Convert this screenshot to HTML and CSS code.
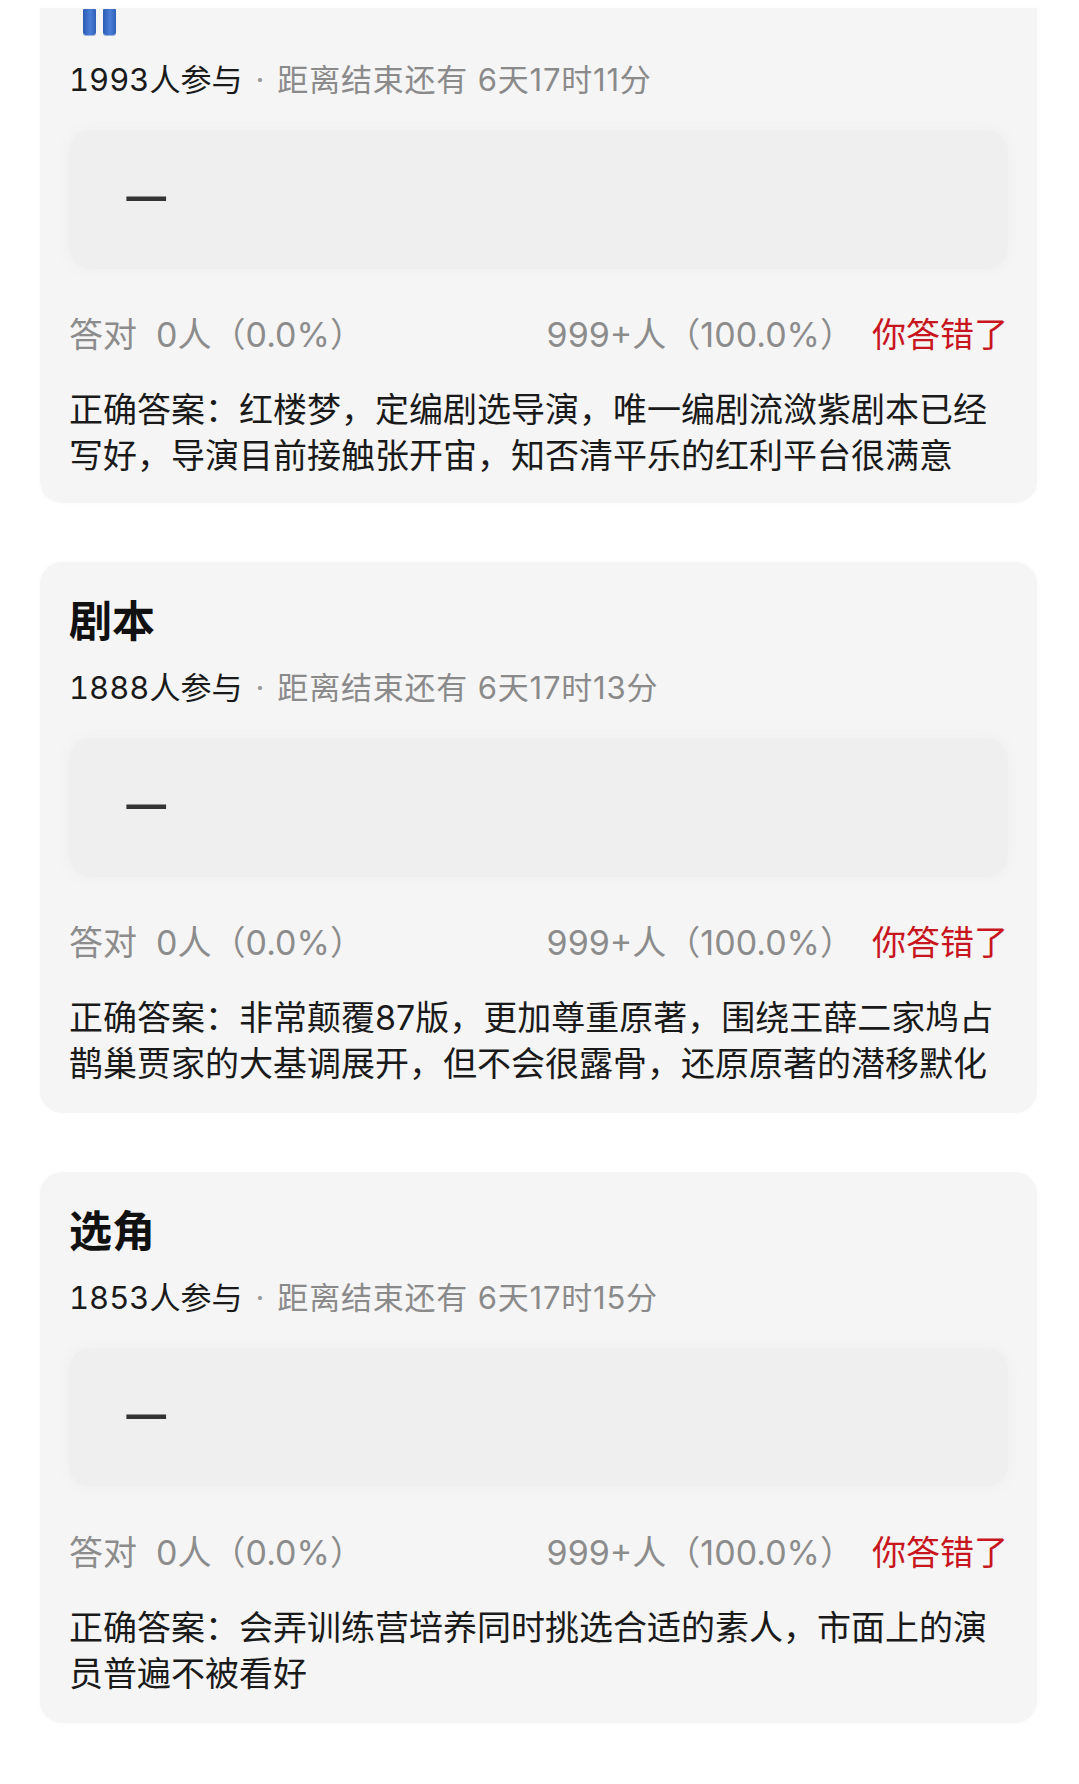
FILE: index.html
```html
<!DOCTYPE html>
<html lang="zh-CN">
<head>
<meta charset="utf-8">
<title>答题结果</title>
<link rel="stylesheet" href="styles.css">
</head>
<body>
<div class="feed">
  <section class="card card-cut">
    <div class="bars"><span class="bar"></span><span class="bar"></span></div>
    <div class="meta"><span class="count">1993人参与</span><span class="dot">·</span><span class="remain">距离结束还有 6天17时11分</span></div>
    <div class="choice"><span class="dash">—</span></div>
    <div class="result">
      <span class="right-count">答对&nbsp;&nbsp;0人（0.0%）</span>
      <span class="wrong-count">999+人（100.0%）</span>
      <span class="verdict">你答错了</span>
    </div>
    <p class="answer">正确答案：红楼梦，定编剧选导演，唯一编剧流潋紫剧本已经写好，导演目前接触张开宙，知否清平乐的红利平台很满意</p>
  </section>

  <section class="card">
    <h2 class="title">剧本</h2>
    <div class="meta"><span class="count">1888人参与</span><span class="dot">·</span><span class="remain">距离结束还有 6天17时13分</span></div>
    <div class="choice"><span class="dash">—</span></div>
    <div class="result">
      <span class="right-count">答对&nbsp;&nbsp;0人（0.0%）</span>
      <span class="wrong-count">999+人（100.0%）</span>
      <span class="verdict">你答错了</span>
    </div>
    <p class="answer">正确答案：非常颠覆87版，更加尊重原著，围绕王薛二家鸠占鹊巢贾家的大基调展开，但不会很露骨，还原原著的潜移默化</p>
  </section>

  <section class="card">
    <h2 class="title">选角</h2>
    <div class="meta"><span class="count">1853人参与</span><span class="dot">·</span><span class="remain">距离结束还有 6天17时15分</span></div>
    <div class="choice"><span class="dash">—</span></div>
    <div class="result">
      <span class="right-count">答对&nbsp;&nbsp;0人（0.0%）</span>
      <span class="wrong-count">999+人（100.0%）</span>
      <span class="verdict">你答错了</span>
    </div>
    <p class="answer">正确答案：会弄训练营培养同时挑选合适的素人，市面上的演员普遍不被看好</p>
  </section>
</div>
</body>
</html>
```

FILE: styles.css
```css
html, body {
  margin: 0;
  padding: 0;
  background: #ffffff;
}

body {
  font-family: "Inter", "Noto Sans CJK SC", "Noto Sans", sans-serif;
  color: #1a1a1a;
  width: 1079px;
  height: 1784px;
  overflow: hidden;
}

.feed {
  display: flex;
  flex-direction: column;
  gap: 59px;
  padding: 8px 42px 0 40px;
}

.card {
  background: #f5f5f5;
  border-radius: 22px;
  padding: 34px 29px 26px 29px;
  box-shadow: 0 0 6px rgba(0, 0, 0, 0.025);
}

.card-cut {
  border-top-left-radius: 0;
  border-top-right-radius: 0;
  padding-top: 1px;
  padding-bottom: 24px;
}

.bars {
  display: flex;
  gap: 7px;
  padding-left: 14px;
  height: 26px;
}

.bar {
  width: 13px;
  height: 26px;
  border-radius: 1px 1px 3px 3px;
  background: linear-gradient(90deg, #2c5cb6 0%, #4a7ed4 55%, #2f60b8 100%);
  box-shadow: 0 1px 0 #9bb3de;
}

.card-cut .meta {
  margin-top: 25px;
}

.title {
  margin: 0;
  font-size: 43px;
  line-height: 50px;
  font-weight: 700;
  color: #111;
}

.meta {
  margin-top: 22px;
  font-size: 31px;
  line-height: 40px;
  white-space: nowrap;
}

.count {
  color: #1a1a1a;
  font-variant-numeric: tabular-nums;
}

.dot {
  color: #999;
  margin: 0 13px 0 13px;
}

.remain {
  color: #8a8a8a;
  letter-spacing: 0.8px;
}

.choice {
  margin-top: 30px;
  height: 139px;
  box-sizing: border-box;
  border-radius: 22px;
  background: #efefef;
  box-shadow: 0 0 8px 2px rgba(239, 239, 239, 0.9);
  display: flex;
  align-items: center;
  padding: 0 0 16px 55px;
}

.dash {
  font-family: "Noto Sans CJK SC", sans-serif;
  font-size: 49px;
  line-height: 40px;
  color: #333;
  font-weight: 700;
}

.result {
  margin-top: 44px;
  display: flex;
  align-items: center;
  font-size: 34px;
  line-height: 44px;
  white-space: nowrap;
}

.right-count {
  color: #8c8c8c;
}

.wrong-count {
  color: #8c8c8c;
  margin-left: auto;
}

.verdict {
  color: #c8161e;
  margin-left: 18px;
}

.answer {
  margin: 30px 0 0 0;
  font-size: 34px;
  line-height: 46px;
  color: #1a1a1a;
}
```
